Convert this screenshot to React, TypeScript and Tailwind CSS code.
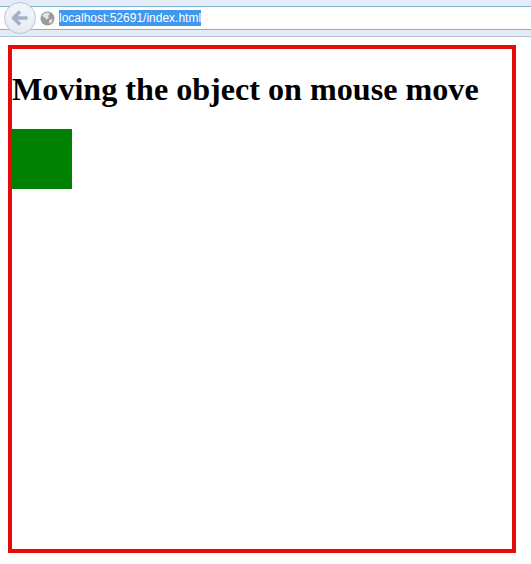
export default function App() {
  return (
    <div className="h-[564px] w-[531px] overflow-hidden bg-white">
      {/* 浏览器工具栏 */}
      <div className="relative h-[37px] border-b border-[#b4c4d8] bg-[#e4ecf8] pt-[6px]">
        <div className="flex h-[24px] items-center border-y border-[#7fb0cc] bg-white pl-[40px]">
          <svg width="15" height="15" viewBox="0 0 15 15" className="shrink-0">
            <circle cx="7.5" cy="7.5" r="7" fill="#9a9a9a" />
            <path d="M4 2.5 L8 1.5 L10 3 L8 5 L9 7 L6.5 8.5 L4 6 L2 5 Z" fill="#e4e4e4" />
            <path d="M9 9 L12.5 8 L12 11 L9.5 13 Z" fill="#e4e4e4" />
          </svg>
          <span className="ml-[4px] bg-[#3f97ee] font-['Liberation_Sans',sans-serif] text-[12px] leading-[16px] text-white">
            localhost:52691/index.html
          </span>
        </div>
        <div className="absolute left-[4px] top-[2px] flex h-[32px] w-[32px] items-center justify-center rounded-full border border-[#b9c7d9] bg-gradient-to-b from-[#f4f6fa] to-[#e6ebf3]">
          <svg width="18" height="16" viewBox="0 0 18 16">
            <path
              d="M9 1.5 L2.5 8 L9 14.5 M3 8 H16.5"
              fill="none"
              stroke="#a3b2c6"
              strokeWidth="3.6"
              strokeLinejoin="round"
            />
          </svg>
        </div>
      </div>

      {/* 页面内容 */}
      <div className="ml-2 mt-2 h-[508px] w-[508px] border-4 border-[#e40b0b]">
        <h1 className="mt-[22px] whitespace-nowrap font-['Liberation_Serif',serif] text-[32.14px] font-bold leading-[37px] text-black">
          Moving the object on mouse move
        </h1>
        <div className="mt-[21px] h-[60px] w-[60px] bg-[#008000]" />
      </div>
    </div>
  );
}
